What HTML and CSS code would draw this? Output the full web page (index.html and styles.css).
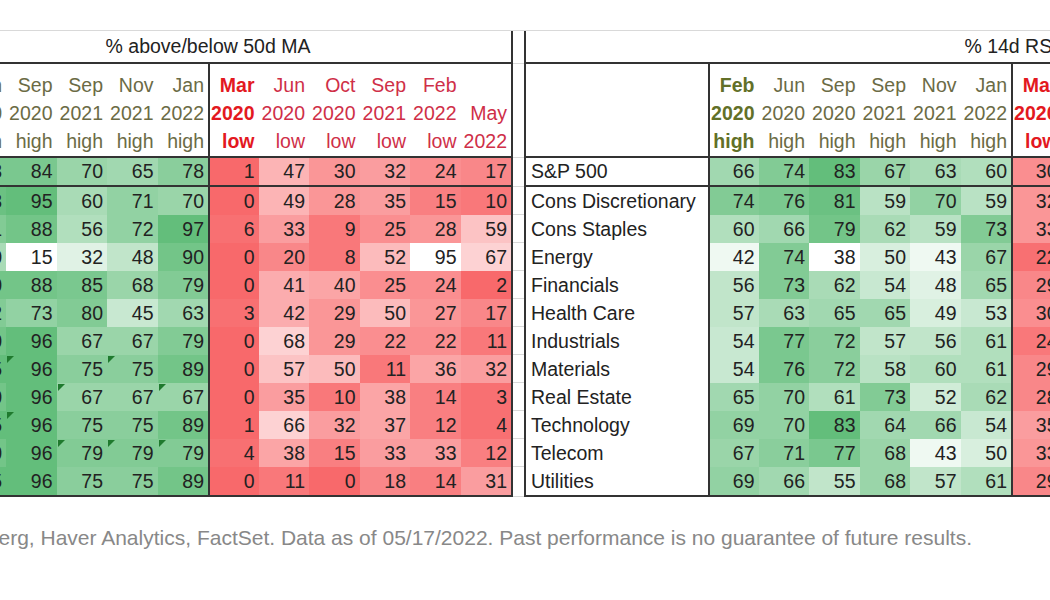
FILE: index.html
```html
<!DOCTYPE html>
<html lang="en">
<head>
<meta charset="utf-8">
<title>Sector breadth: % above/below 50d MA and % 14d RSI</title>
<link rel="stylesheet" href="styles.css">
</head>
<body>
<div class="sheet">
  <div class="tbl tl">
    <div class="row title"><div class="ttl">% above/below 50d MA</div></div>
    <div class="row head">
      <div class="c hd hi bold">Feb<br>2020<br>high</div>
      <div class="c hd hi">Jun<br>2020<br>high</div>
      <div class="c hd hi">Sep<br>2020<br>high</div>
      <div class="c hd hi">Sep<br>2021<br>high</div>
      <div class="c hd hi">Nov<br>2021<br>high</div>
      <div class="c hd hi">Jan<br>2022<br>high</div>
      <div class="c hd lo bold b">Mar<br>2020<br>low</div>
      <div class="c hd lo">Jun<br>2020<br>low</div>
      <div class="c hd lo">Oct<br>2020<br>low</div>
      <div class="c hd lo">Sep<br>2021<br>low</div>
      <div class="c hd lo">Feb<br>2022<br>low</div>
      <div class="c hd lo">May<br>2022</div>
    </div>
    <div class="row sp">
      <div class="c g18">88</div><div class="c g17">83</div><div class="c g17">84</div><div class="c g13">70</div><div class="c g12">65</div><div class="c g15">78</div>
      <div class="c b r20">1</div><div class="c r10">47</div><div class="c r14">30</div><div class="c r13">32</div><div class="c r15">24</div><div class="c r16">17</div>
    </div>
    <div class="row">
      <div class="c g18">90</div><div class="c g19">93</div><div class="c g20">95</div><div class="c g11">60</div><div class="c g14">71</div><div class="c g13">70</div>
      <div class="c b r20">0</div><div class="c r10">49</div><div class="c r14">28</div><div class="c r13">35</div><div class="c r17">15</div><div class="c r18">10</div>
    </div>
    <div class="row">
      <div class="c g17">85</div><div class="c g16">81</div><div class="c g18">88</div><div class="c g10">56</div><div class="c g14">72</div><div class="c g20">97</div>
      <div class="c b r19">6</div><div class="c r13">33</div><div class="c r18">9</div><div class="c r15">25</div><div class="c r14">28</div><div class="c r8">59</div>
    </div>
    <div class="row">
      <div class="c g13">70</div><div class="c g11">60</div><div class="c g0">15</div><div class="c g4">32</div><div class="c g8">48</div><div class="c g18">90</div>
      <div class="c b r20">0</div><div class="c r16">20</div><div class="c r18">8</div><div class="c r9">52</div><div class="c r0">95</div><div class="c r6">67</div>
    </div>
    <div class="row">
      <div class="c g17">86</div><div class="c g18">90</div><div class="c g18">88</div><div class="c g17">85</div><div class="c g13">68</div><div class="c g16">79</div>
      <div class="c b r20">0</div><div class="c r11">41</div><div class="c r12">40</div><div class="c r15">25</div><div class="c r15">24</div><div class="c r20">2</div>
    </div>
    <div class="row">
      <div class="c g17">84</div><div class="c g16">82</div><div class="c g14">73</div><div class="c g16">80</div><div class="c g7">45</div><div class="c g12">63</div>
      <div class="c b r19">3</div><div class="c r11">42</div><div class="c r14">29</div><div class="c r9">50</div><div class="c r14">27</div><div class="c r16">17</div>
    </div>
    <div class="row">
      <div class="c g19">91</div><div class="c g18">90</div><div class="c g20">96</div><div class="c g13">67</div><div class="c g13">67</div><div class="c g16">79</div>
      <div class="c b r20">0</div><div class="c r6">68</div><div class="c r14">29</div><div class="c r15">22</div><div class="c r15">22</div><div class="c r18">11</div>
    </div>
    <div class="row">
      <div class="c g19">92</div><div class="c g20">95</div><div class="c g20 tri">96</div><div class="c g15">75</div><div class="c g15 tri">75</div><div class="c g18">89</div>
      <div class="c b r20">0</div><div class="c r8">57</div><div class="c r9">50</div><div class="c r18">11</div><div class="c r12">36</div><div class="c r13">32</div>
    </div>
    <div class="row">
      <div class="c g18">88</div><div class="c g18">90</div><div class="c g20">96</div><div class="c g13 tri">67</div><div class="c g13">67</div><div class="c g13 tri">67</div>
      <div class="c b r20">0</div><div class="c r13">35</div><div class="c r18">10</div><div class="c r12">38</div><div class="c r17">14</div><div class="c r19">3</div>
    </div>
    <div class="row">
      <div class="c g19">93</div><div class="c g20">95</div><div class="c g20 tri">96</div><div class="c g15">75</div><div class="c g15">75</div><div class="c g18">89</div>
      <div class="c b r20">1</div><div class="c r6">66</div><div class="c r13">32</div><div class="c r12">37</div><div class="c r17">12</div><div class="c r19">4</div>
    </div>
    <div class="row">
      <div class="c g18">90</div><div class="c g18">90</div><div class="c g20">96</div><div class="c g16 tri">79</div><div class="c g16 tri">79</div><div class="c g16 tri">79</div>
      <div class="c b r19">4</div><div class="c r12">38</div><div class="c r17">15</div><div class="c r13">33</div><div class="c r13">33</div><div class="c r17">12</div>
    </div>
    <div class="row last">
      <div class="c g19">93</div><div class="c g20">95</div><div class="c g20">96</div><div class="c g15">75</div><div class="c g15">75</div><div class="c g18">89</div>
      <div class="c b r20">0</div><div class="c r18">11</div><div class="c r20">0</div><div class="c r16">18</div><div class="c r17">14</div><div class="c r13">31</div>
    </div>
  </div>

  <div class="gap">
    <div class="gr gt"></div>
    <div class="gr gh"></div>
    <div class="gr gs"></div>
    <div class="gr"></div><div class="gr"></div><div class="gr"></div><div class="gr"></div><div class="gr"></div>
    <div class="gr"></div><div class="gr"></div><div class="gr"></div><div class="gr"></div><div class="gr"></div>
    <div class="gr gl"></div>
  </div>

  <div class="tbl tr">
    <div class="row title"><div class="spacer"></div><div class="ttl">% 14d RSI</div></div>
    <div class="row head">
      <div class="c n"></div>
      <div class="c hd hi bold b">Feb<br>2020<br>high</div>
      <div class="c hd hi">Jun<br>2020<br>high</div>
      <div class="c hd hi">Sep<br>2020<br>high</div>
      <div class="c hd hi">Sep<br>2021<br>high</div>
      <div class="c hd hi">Nov<br>2021<br>high</div>
      <div class="c hd hi">Jan<br>2022<br>high</div>
      <div class="c hd lo bold b">Mar<br>2020<br>low</div>
    </div>
    <div class="row sp">
      <div class="c n">S&amp;P 500</div>
      <div class="c b g12">66</div><div class="c g16">74</div><div class="c g20">83</div><div class="c g13">67</div><div class="c g11">63</div><div class="c g10">60</div>
      <div class="c b r15">30</div>
    </div>
    <div class="row">
      <div class="c n">Cons Discretionary</div>
      <div class="c b g16">74</div><div class="c g17">76</div><div class="c g19">81</div><div class="c g9">59</div><div class="c g14">70</div><div class="c g9">59</div>
      <div class="c b r14">32</div>
    </div>
    <div class="row">
      <div class="c n">Cons Staples</div>
      <div class="c b g10">60</div><div class="c g12">66</div><div class="c g18">79</div><div class="c g11">62</div><div class="c g9">59</div><div class="c g16">73</div>
      <div class="c b r14">33</div>
    </div>
    <div class="row">
      <div class="c n">Energy</div>
      <div class="c b g2">42</div><div class="c g16">74</div><div class="c g0">38</div><div class="c g5">50</div><div class="c g2">43</div><div class="c g13">67</div>
      <div class="c b r19">22</div>
    </div>
    <div class="row">
      <div class="c n">Financials</div>
      <div class="c b g8">56</div><div class="c g16">73</div><div class="c g11">62</div><div class="c g7">54</div><div class="c g4">48</div><div class="c g12">65</div>
      <div class="c b r16">29</div>
    </div>
    <div class="row">
      <div class="c n">Health Care</div>
      <div class="c b g8">57</div><div class="c g11">63</div><div class="c g12">65</div><div class="c g12">65</div><div class="c g5">49</div><div class="c g7">53</div>
      <div class="c b r15">30</div>
    </div>
    <div class="row">
      <div class="c n">Industrials</div>
      <div class="c b g7">54</div><div class="c g17">77</div><div class="c g15">72</div><div class="c g8">57</div><div class="c g8">56</div><div class="c g10">61</div>
      <div class="c b r18">24</div>
    </div>
    <div class="row">
      <div class="c n">Materials</div>
      <div class="c b g7">54</div><div class="c g17">76</div><div class="c g15">72</div><div class="c g9">58</div><div class="c g10">60</div><div class="c g10">61</div>
      <div class="c b r16">29</div>
    </div>
    <div class="row">
      <div class="c n">Real Estate</div>
      <div class="c b g12">65</div><div class="c g14">70</div><div class="c g10">61</div><div class="c g16">73</div><div class="c g6">52</div><div class="c g11">62</div>
      <div class="c b r16">28</div>
    </div>
    <div class="row">
      <div class="c n">Technology</div>
      <div class="c b g14">69</div><div class="c g14">70</div><div class="c g20">83</div><div class="c g12">64</div><div class="c g12">66</div><div class="c g7">54</div>
      <div class="c b r13">35</div>
    </div>
    <div class="row">
      <div class="c n">Telecom</div>
      <div class="c b g13">67</div><div class="c g15">71</div><div class="c g17">77</div><div class="c g13">68</div><div class="c g2">43</div><div class="c g5">50</div>
      <div class="c b r14">33</div>
    </div>
    <div class="row last">
      <div class="c n">Utilities</div>
      <div class="c b g14">69</div><div class="c g12">66</div><div class="c g8">55</div><div class="c g13">68</div><div class="c g8">57</div><div class="c g10">61</div>
      <div class="c b r16">29</div>
    </div>
  </div>
</div>
<p class="note"><span>Source: Bloomberg, Haver Analytics, FactSet. Data as of 05/17/2022. Past performance is no guarantee of future results.</span></p>
</body>
</html>
```
FILE: styles.css
```css
html, body {
  margin: 0;
  padding: 0;
  overflow: hidden;
  background: #ffffff;
}
body {
  font-family: "Liberation Sans", Arial, sans-serif;
  font-size: 19.5px;
  color: #222222;
}
.sheet {
  display: flex;
  width: max-content;
  margin: 30px 0 0 -95px;
  border-top: 1px solid #d9d9d9;
}
.tbl { flex: none; }
.tl { border-right: 2px solid #333333; }
.tr { border-left: 2px solid #333333; }

.row {
  display: flex;
  height: 28px;
}
.row.title {
  height: 31px;
  border-bottom: 2px solid #333333;
}
.row.head {
  height: 92px;
  border-bottom: 2px solid #333333;
}
.row.sp {
  height: 27px;
  border-bottom: 2px solid #333333;
}
.row.last { border-bottom: 2px solid #333333; }

.ttl {
  flex: none;
  width: 606px;
  display: flex;
  align-items: center;
  justify-content: center;
  white-space: nowrap;
}
.spacer { flex: none; width: 182px; }

.c {
  flex: none;
  width: 50.5px;
  box-sizing: border-box;
  display: flex;
  align-items: center;
  justify-content: flex-end;
  padding-right: 4px;
  position: relative;
  white-space: nowrap;
}
.n {
  width: 182px;
  justify-content: flex-start;
  padding: 0 0 0 5px;
}
.b { border-left: 2px solid #333333; }

.hd {
  align-items: flex-end;
  text-align: right;
  line-height: 28px;
  padding-bottom: 1px;
}
.hi { color: #6b6b45; }
.hi.bold { color: #627028; font-weight: bold; }
.lo { color: #cf2f48; }
.lo.bold { color: #e3191f; font-weight: bold; }

.tri::before {
  content: "";
  position: absolute;
  top: 1px;
  left: 1px;
  width: 0;
  height: 0;
  border-top: 7px solid #1f7a2e;
  border-right: 7px solid transparent;
}

.gap { flex: none; width: 11px; }
.gr {
  box-sizing: border-box;
  height: 28px;
  border-bottom: 1px solid #d9d9d9;
}
.gr.gt { height: 33px; }
.gr.gh { height: 94px; }
.gr.gs { height: 29px; }
.gr.gl { height: 30px; }

.note {
  display: flex;
  justify-content: flex-end;
  width: 972px;
  margin: 29px 0 0;
  font-size: 21px;
  color: #888888;
  white-space: nowrap;
}
.note span { flex: none; }

.g0 { background: #ffffff; }
.g1 { background: #f7fcf8; }
.g2 { background: #eff9f2; }
.g3 { background: #e8f5eb; }
.g4 { background: #e0f2e5; }
.g5 { background: #d8efde; }
.g6 { background: #d0ecd7; }
.g7 { background: #c8e8d1; }
.g8 { background: #c1e5ca; }
.g9 { background: #b9e2c4; }
.g10 { background: #b1dfbd; }
.g11 { background: #a9dbb6; }
.g12 { background: #a1d8b0; }
.g13 { background: #9ad5a9; }
.g14 { background: #92d2a3; }
.g15 { background: #8ace9c; }
.g16 { background: #82cb95; }
.g17 { background: #7ac88f; }
.g18 { background: #73c588; }
.g19 { background: #6bc182; }
.g20 { background: #63be7b; }

.r0 { background: #ffffff; }
.r1 { background: #fff8f8; }
.r2 { background: #fef0f0; }
.r3 { background: #fee8e9; }
.r4 { background: #fee1e1; }
.r5 { background: #fdd9da; }
.r6 { background: #fdd2d3; }
.r7 { background: #fdcacb; }
.r8 { background: #fcc3c4; }
.r9 { background: #fcbbbc; }
.r10 { background: #fcb4b5; }
.r11 { background: #fbacae; }
.r12 { background: #fba5a6; }
.r13 { background: #fa9d9f; }
.r14 { background: #fa9697; }
.r15 { background: #fa8e90; }
.r16 { background: #f98789; }
.r17 { background: #f97f81; }
.r18 { background: #f9787a; }
.r19 { background: #f87072; }
.r20 { background: #f8696b; }
```
